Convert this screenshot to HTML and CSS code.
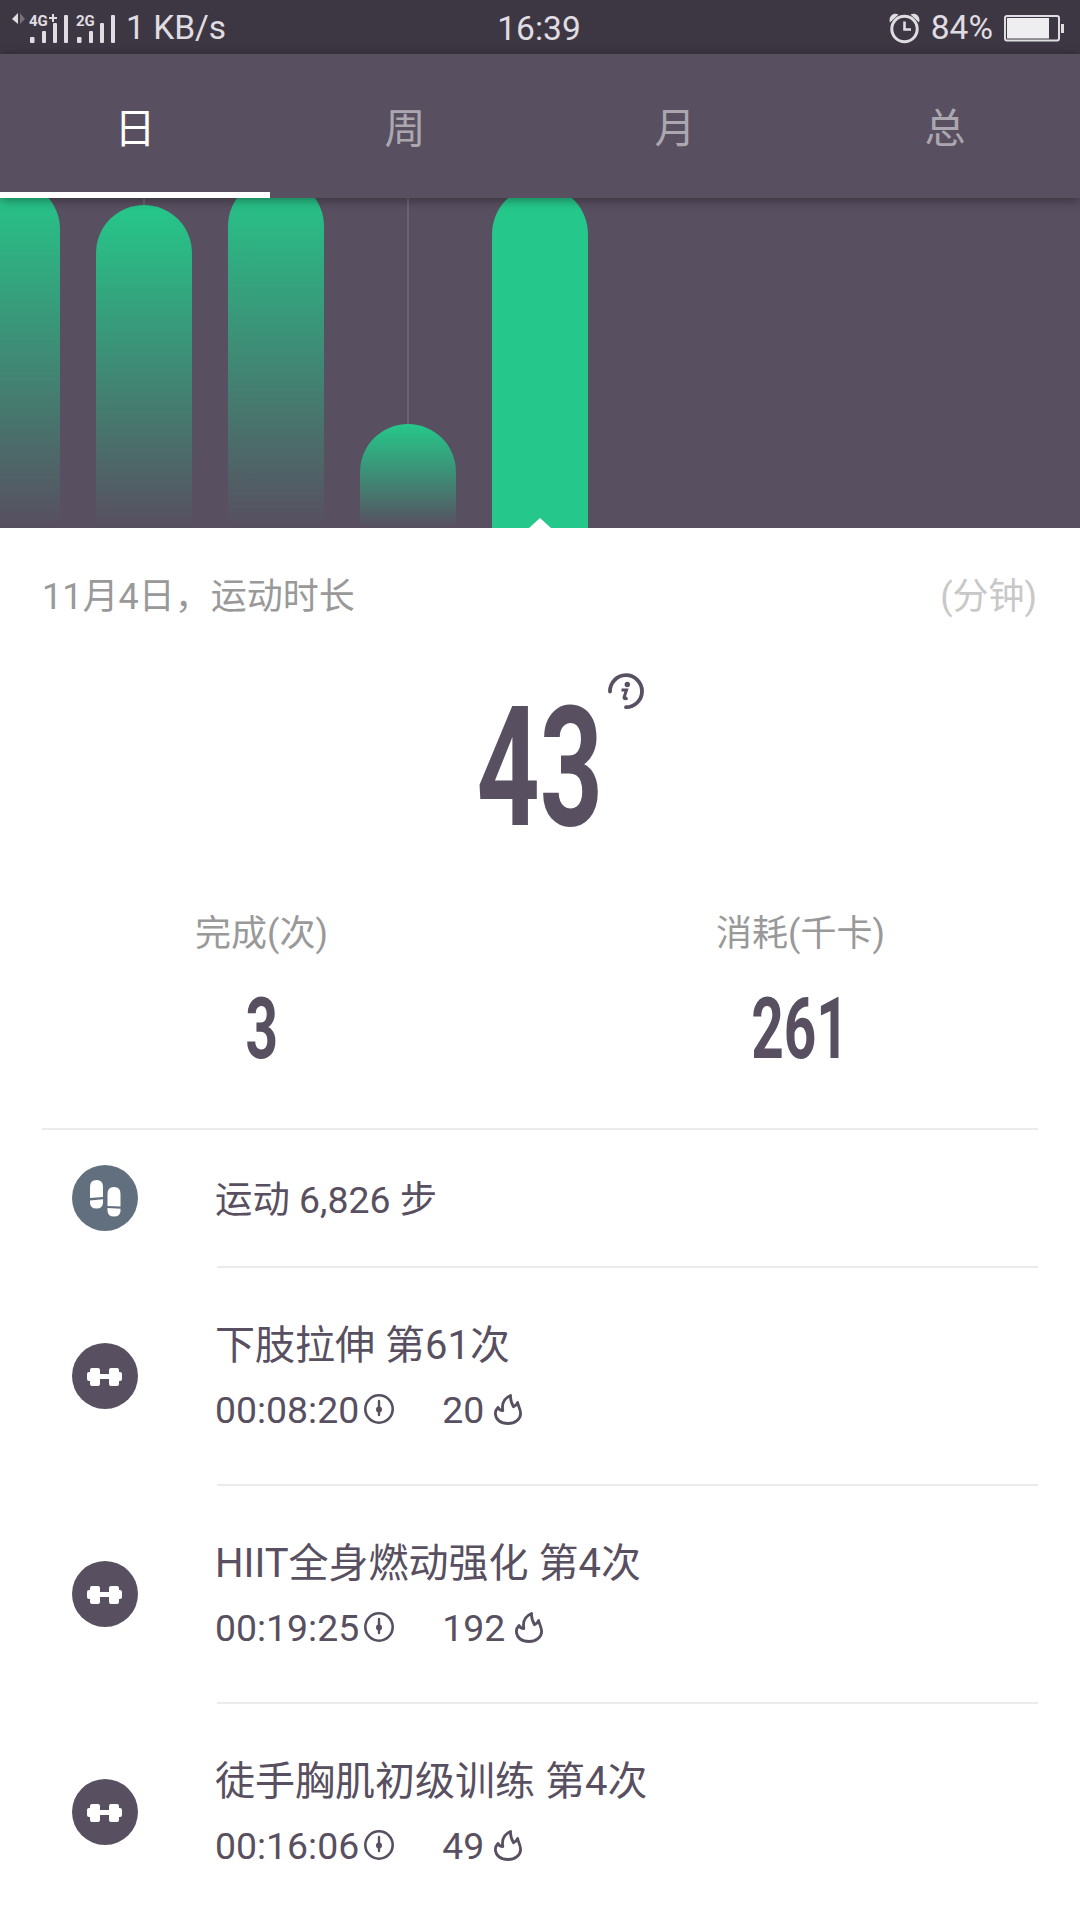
FILE: index.html
```html
<!DOCTYPE html>
<html lang="zh-CN">
<head>
    <meta charset="utf-8">
    <title>运动数据</title>
    <link rel="stylesheet" href="styles.css">
</head>
<body>
    <svg class="defs" width="0" height="0">
        <symbol id="dumbbell" viewBox="0 0 66 66">
            <rect x="15" y="29" width="8" height="9" rx="2"/>
            <rect x="18" y="25" width="10" height="18" rx="2"/>
            <rect x="26" y="31" width="14" height="5"/>
            <rect x="37" y="25" width="10" height="18" rx="2"/>
            <rect x="42" y="29" width="8" height="9" rx="2"/>
        </symbol>
        <symbol id="clock" viewBox="0 0 30 30">
            <circle cx="15" cy="15" r="13.7" fill="none" stroke="currentColor" stroke-width="2.6"/>
            <path d="M15 7v14" stroke="currentColor" stroke-width="2.4" stroke-linecap="round"/>
            <circle cx="15" cy="15.5" r="3" fill="currentColor"/>
        </symbol>
        <symbol id="flame" viewBox="0 0 28 31">
            <path d="M4 13.500C1.500 16 1.300 18 1.400 20 1.800 26 7 29.500 14 29.500S26.600 25 26.600 19.500C26.600 15 24.500 13 23.600 8.500 22.800 10.500 21.500 12 19.500 12.800 17.500 9 16 6 16.600 1.500 10.500 4 7.500 9 8.800 16.500 6.500 16.500 5 15.500 4 13.500z" fill="none" stroke="currentColor" stroke-width="2.800" stroke-linejoin="round"/>
        </symbol>
    </svg>

    <div class="status-bar">
        <div class="status-left">
            <svg class="signal" width="106" height="32" viewBox="0 0 106 32">
                <path class="arrow" d="M0 7l6-6v11z"/>
                <path class="arrow-dim" d="M13 7L8 1v11z"/>
                <text x="17" y="14">4G</text>
                <path d="M37 6h8M41 2v8" stroke="#e0dde2" stroke-width="2"/>
                <rect x="18" y="25" width="4.500" height="6" rx="1"/>
                <rect x="30" y="19" width="4" height="12" rx="1"/>
                <rect x="41" y="11" width="4" height="20" rx="1"/>
                <rect x="52" y="3" width="4" height="28" rx="1"/>
                <text x="64" y="14">2G</text>
                <rect x="65" y="25" width="4.500" height="6" rx="1"/>
                <rect x="77" y="19" width="4" height="12" rx="1"/>
                <rect x="88" y="11" width="4" height="20" rx="1"/>
                <rect x="99" y="3" width="4" height="28" rx="1"/>
            </svg>
            <span>1 KB/s</span>
        </div>
        <div class="status-time">16:39</div>
        <div class="status-right">
            <svg width="31" height="31" viewBox="0 0 31 31">
                <circle cx="15.500" cy="16" r="12.700" fill="none" stroke="#e0dde2" stroke-width="3"/>
                <path d="M15.500 8.500v8h6.500" fill="none" stroke="#e0dde2" stroke-width="2.600"/>
                <path d="M1 9.500C-1 4 4-1 9.500 1.500zM30 9.500C32 4 27-1 21.500 1.500z" fill="#e0dde2"/>
            </svg>
            <span>84%</span>
            <svg width="60" height="27" viewBox="0 0 60 27">
                <rect x="1" y="1" width="54" height="24.500" rx="2" fill="none" stroke="#e0dde2" stroke-width="2"/>
                <rect x="3" y="3" width="42" height="20.500" fill="#eeedf0"/>
                <rect x="57" y="9" width="3" height="9" fill="#e0dde2"/>
            </svg>
        </div>
    </div>

    <div class="tabs">
        <div class="tab active">日</div>
        <div class="tab">周</div>
        <div class="tab">月</div>
        <div class="tab">总</div>
    </div>

    <div class="chart">
        <div class="col"><div class="bar" style="height: 347px"></div></div>
        <div class="col"><div class="bar" style="height: 323px"></div></div>
        <div class="col"><div class="bar" style="height: 350px"></div></div>
        <div class="col"><div class="bar" style="height: 104px"></div></div>
        <div class="col"><div class="bar selected" style="height: 342px"></div></div>
    </div>

    <div class="summary">
        <div class="summary-head">
            <span>11月4日，运动时长</span>
            <span class="unit">(分钟)</span>
        </div>
        <div class="total">
            <span class="number">43</span>
            <svg class="info" width="36" height="37" viewBox="0 0 36 37">
                <path d="M2 18.500A16 16 0 1 1 18 34.200" fill="none" stroke="#584f60" stroke-width="3.800" stroke-linecap="round"/>
                <circle cx="19.300" cy="11.500" r="2.700" fill="#584f60"/>
                <path d="M13.500 17h5l-2.500 7.500q-.2 2 3.500 .5" fill="none" stroke="#584f60" stroke-width="3"/>
            </svg>
        </div>
        <div class="stats">
            <div class="stat">
                <div class="stat-label">完成(次)</div>
                <div class="stat-value"><span class="number">3</span></div>
            </div>
            <div class="stat">
                <div class="stat-label">消耗(千卡)</div>
                <div class="stat-value"><span class="number">261</span></div>
            </div>
        </div>
    </div>

    <div class="list">
        <div class="row steps">
            <svg class="badge badge-steps" viewBox="0 0 66 66">
                <path d="M18 33V22q0-7 6.500-7T31 22v10zM18 35.500l13-1.300v3.300q0 6-6.500 6T18 37.500zM35.500 41V29q0-7 6.500-7t6.500 7v12.500zM35.500 43l13 .7v2q0 5.800-6.500 5.800t-6.500-6z"/>
            </svg>
            <div class="detail">运动 6,826 步</div>
        </div>
        <div class="row">
            <svg class="badge"><use href="#dumbbell"/></svg>
            <div class="detail">
                <div class="title">下肢拉伸 第61次</div>
                <div class="meta">
                    <span class="time">00:08:20</span><svg class="clock"><use href="#clock"/></svg>
                    <span class="kcal">20</span><svg class="flame"><use href="#flame"/></svg>
                </div>
            </div>
        </div>
        <div class="row">
            <svg class="badge"><use href="#dumbbell"/></svg>
            <div class="detail">
                <div class="title">HIIT全身燃动强化 第4次</div>
                <div class="meta">
                    <span class="time">00:19:25</span><svg class="clock"><use href="#clock"/></svg>
                    <span class="kcal">192</span><svg class="flame"><use href="#flame"/></svg>
                </div>
            </div>
        </div>
        <div class="row">
            <svg class="badge"><use href="#dumbbell"/></svg>
            <div class="detail">
                <div class="title">徒手胸肌初级训练 第4次</div>
                <div class="meta">
                    <span class="time">00:16:06</span><svg class="clock"><use href="#clock"/></svg>
                    <span class="kcal">49</span><svg class="flame"><use href="#flame"/></svg>
                </div>
            </div>
        </div>
    </div>
</body>
</html>
```
FILE: styles.css
```css
* {
    box-sizing: border-box;
}

body {
    margin: 0;
    width: 1080px;
    height: 1920px;
    overflow: hidden;
    background: #fff;
    color: #584f60;
    font-family: Roboto, "Noto Sans CJK SC", sans-serif;
}

svg {
    display: block;
    flex: none;
}

.defs {
    position: absolute;
}

/* status bar */
.status-bar {
    display: grid;
    grid-template-columns: 1fr auto 1fr;
    align-items: center;
    height: 54px;
    padding: 0 16px 0 12px;
    background: #3d3743;
    color: #e0dde2;
    font-size: 33.5px;
    line-height: 54px;
}

.status-left,
.status-right {
    display: flex;
    align-items: center;
}

.status-left {
    gap: 8px;
}

.status-right {
    justify-content: flex-end;
    gap: 11px;
}

.status-time {
    padding: 2px 0 0 2px;
}

.signal {
    fill: #e0dde2;
    font-size: 15px;
    font-weight: 700;
}

.signal .arrow-dim {
    fill: #77717c;
}

/* tabs */
.tabs {
    position: relative;
    display: flex;
    height: 144px;
    background: #584f60;
    box-shadow: 0 2px 10px rgba(0, 0, 0, 0.4);
}

.tab {
    flex: 1;
    padding-top: 4px;
    border-bottom: 6px solid transparent;
    color: #aba7af;
    font-size: 41px;
    line-height: 142px;
    height: 144px;
    text-align: center;
}

.tab.active {
    border-color: #fff;
    color: #fff;
}

/* chart */
.chart {
    display: flex;
    align-items: flex-end;
    gap: 36px;
    height: 330px;
    padding-left: 96px;
    overflow: hidden;
    background: #584f60;
}

.col {
    display: flex;
    flex: none;
    align-items: flex-end;
    width: 96px;
    height: 330px;
    background: linear-gradient(#6b6373, #6b6373) center / 2px 100% no-repeat;
}

.col:first-child {
    margin-left: -132px;
}

.bar {
    flex: none;
    width: 96px;
    border-radius: 48px 48px 0 0;
    background: linear-gradient(#25c88a, #584f60), #584f60;
}

.bar.selected {
    display: flex;
    align-items: flex-end;
    justify-content: center;
    background: #25c88a;
}

.bar.selected::after {
    content: "";
    border: solid transparent;
    border-width: 0 11px 10px;
    border-bottom-color: #fff;
}

/* summary */
.summary {
    height: 600px;
}

.summary-head {
    display: flex;
    justify-content: space-between;
    padding: 42px 43px 0 42px;
    color: #999;
    font-size: 36px;
    line-height: 54px;
}

.summary-head .unit {
    color: #c8c8c8;
}

.number {
    display: inline-block;
    font-weight: 700;
    transform: scaleX(0.66);
}

.total {
    position: relative;
    height: 255px;
    padding-top: 45px;
    font-size: 167px;
    line-height: 198px;
    text-align: center;
}

.info {
    position: absolute;
    top: 49px;
    left: 608px;
}

.stats {
    display: grid;
    grid-template-columns: 523px 555px;
    text-align: center;
}

.stat-label {
    color: #999;
    font-size: 36px;
    line-height: 54px;
    padding-top: 28px;
}

.stat-value {
    font-size: 86px;
    line-height: 130px;
    padding-top: 3px;
}

/* workout list */
.list {
    margin: 0 42px;
    border-top: 2px solid #ebebeb;
}

.row {
    display: flex;
    align-items: center;
    height: 218px;
    padding-left: 30px;
}

.row.steps {
    height: 138px;
}

.badge {
    width: 66px;
    height: 66px;
    margin-bottom: 2px;
    border-radius: 50%;
    background: #584f60;
    fill: #fff;
}

.badge-steps {
    background: #626f7e;
}

.detail {
    display: flex;
    flex: 1;
    flex-direction: column;
    justify-content: center;
    height: 100%;
    margin-left: 77px;
    border-style: solid;
    border-width: 0 0 2px;
    border-image: linear-gradient(to right, transparent 4px, #ebebeb 4px) 2;
    font-size: 37.4px;
}

.steps .detail {
    padding-bottom: 2px;
}

.title {
    padding-top: 4px;
    font-size: 40px;
    line-height: 64px;
}

.meta {
    display: flex;
    align-items: center;
    line-height: 64px;
}

.clock {
    width: 30px;
    height: 30px;
    margin: 0 0 2px 5px;
}

.kcal {
    margin-left: 48px;
}

.flame {
    width: 28px;
    height: 31px;
    margin: 0 0 2px 10px;
}
```
